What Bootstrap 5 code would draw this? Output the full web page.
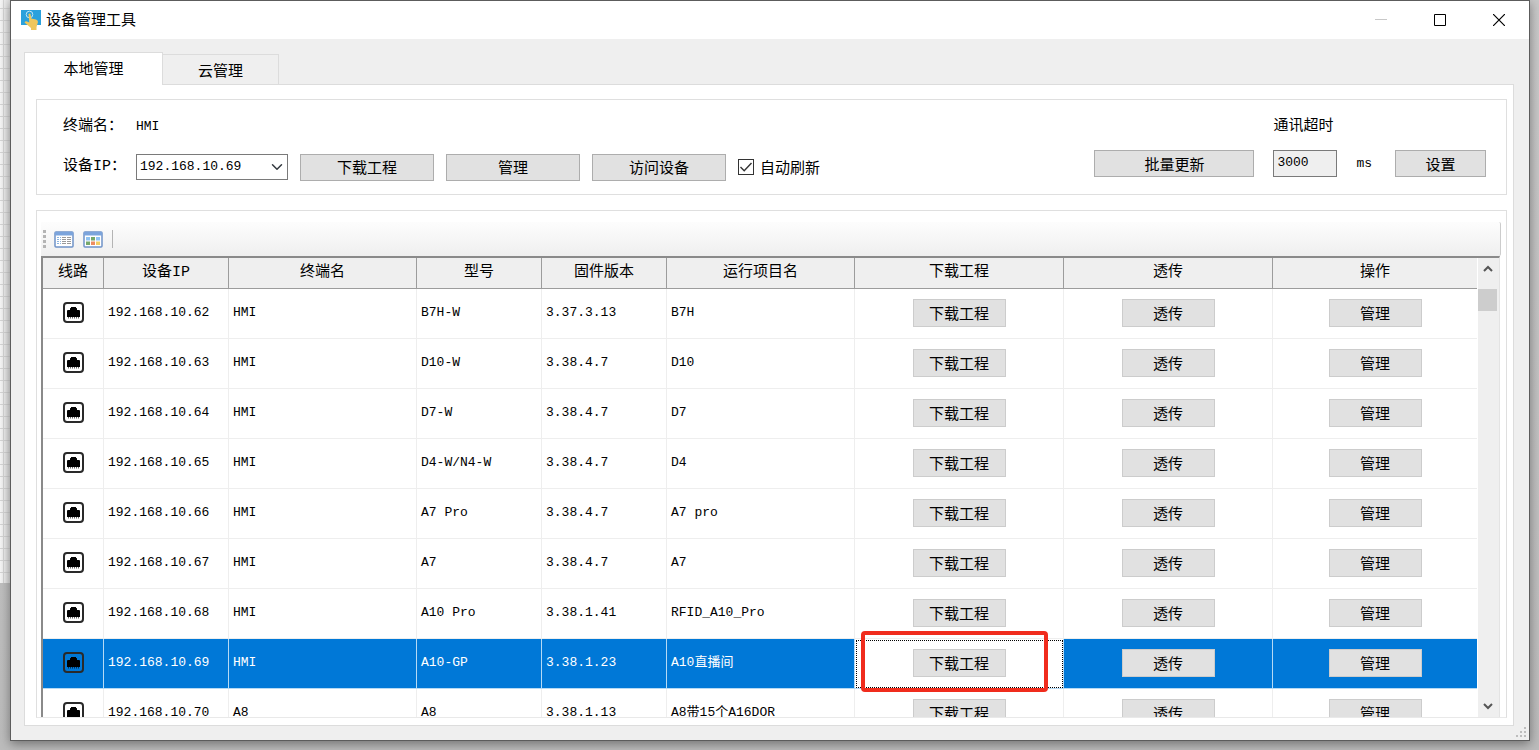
<!DOCTYPE html>
<html lang="zh-CN">
<head>
<meta charset="utf-8">
<meta name="viewport" content="width=device-width, initial-scale=1">
<title>设备管理工具</title>
<link href="https://cdn.jsdelivr.net/npm/bootstrap@5.3.0/dist/css/bootstrap.min.css" rel="stylesheet">
<style>
  :root { --ui: "Liberation Mono", "Noto Sans CJK SC", monospace; --cjk: "Noto Sans CJK SC", sans-serif; }
  body { font-family: var(--ui); font-size: 15px; line-height: 20px; color: #000; background: #c4c4c4; }

  /* desktop behind the window */
  .desk { height: 100vh; padding: 0 9px 9px 10px; position: relative; background: linear-gradient(#c9c9c9, #bcbcbc); }
  .canvas-strip { position: absolute; left: 0; top: 0; width: 10px; bottom: 167px;
    background: repeating-linear-gradient(#0000 0 8px, #d4d4d4 8px 9px, #0000 9px 12px), linear-gradient(90deg, #0000 0 3px, #d4d4d4 3px 4px, #0000 4px), linear-gradient(90deg, #f6f6f6, #dedede); }

  /* window frame */
  .win { background: #efefef; border: 1px solid #5c5c5c; box-shadow: 0 3px 10px #0006; position: relative; min-width: 0; }
  .title-bar { height: 38px; background: #fff; padding-left: 10px; font-family: var(--cjk); }
  .title-bar svg.logo { margin-right: 5px; }
  .title-bar .caption { padding-bottom: 2px; }
  .win-btn { border: 0; background: none; width: 59px; height: 38px; padding: 0 2px 0 0; display: flex; align-items: center; justify-content: center; }
  .page-area { padding: 13px 15px 14px 13px; min-height: 0; }
  .tab-btn { border: 1px solid #dcdcdc; background: #efefef; border-bottom: 0; color: #000; padding: 0; height: 30px; width: 116px; font-family: var(--cjk); line-height: 30px; }
  .tab-btn.active { background: #fff; width: 139px; height: 33px; padding-bottom: 2px; margin-bottom: -1px; position: relative; z-index: 1; }
  .tab-btn + .tab-btn { border-left: 0; }
  .sheet { background: #fff; border: 1px solid #dcdcdc; padding: 14px 6px 7px 11px; min-height: 0; }
  .group { border: 1px solid #dfdfdf; }

  /* settings */
  .settings { padding: 17px 20px 13px 26px; margin-bottom: 15px; }
  .settings-line { min-height: 28px; }
  .key { width: 73px; }
  .small-mono { font-size: 13px; }
  .flat { background: #e1e1e1; border: 1px solid #adadad; border-radius: 0; color: #000; padding: 0; height: 27px; font-size: 15px; line-height: 24px; font-family: var(--cjk); }
  .flat:hover { background: #e5f1fb; border-color: #0078d7; color: #000; }
  .w-act { width: 134px; }
  .w-batch { width: 160px; }
  .w-set { width: 91px; }
  .combo { width: 152px; height: 26px; border: 1px solid #7a7a7a; border-radius: 0; padding: 0 20px 1px 3px; color: #000; font-size: 13px; line-height: 20px;
    background-position: right 4px center; background-size: 12px 12px; }
  .num { width: 64px; height: 27px; border: 1px solid #7a7a7a; border-radius: 0; padding: 0 3px 3px; background: #efefef; color: #000; font-size: 13px; }
  .tick { appearance: none; width: 16px; height: 16px; border: 1px solid #333; margin: 0; background: #fff; }
  .tick:checked { background: #fff url("data:image/svg+xml,%3Csvg xmlns='http://www.w3.org/2000/svg' viewBox='0 0 14 14'%3E%3Cpath d='M1.5 7l3.7 3.7L12.5 3' fill='none' stroke='%23333' stroke-width='1.4'/%3E%3C/svg%3E"); }
  .tick-label { font-family: var(--cjk); }
  .gap-6 { gap: 6px; }
  .gap-12 { gap: 12px; }
  .gap-19 { gap: 19px; }

  /* device list */
  .list-box { padding: 11px 5px 0 4px; min-height: 0; border-bottom-color: #e9e9e9; }
  .tools { height: 34px; background: linear-gradient(#fdfdfd, #efefef); border-right: 1px solid #ccc; padding: 0 2px; border-radius: 0 2px 2px 0; }
  .tool { border: 0; background: none; padding: 0; width: 29px; height: 22px; display: flex; align-items: center; }
  .grip { width: 3px; height: 18px; margin-right: 8px; background: repeating-linear-gradient(#b4b4b4 0 3px, #0000 3px 5px); }
  .bar-end { width: 1px; height: 18px; background: #b4b4b4; }
  .grid-wrap { min-height: 0; border-top: 2px solid #8a8a8a; border-left: 2px solid #8a8a8a; margin-right: 1px; border-right: 1px solid #e3e3e3; }
  .devices { table-layout: fixed; width: 100%; border-collapse: separate; border-spacing: 0; font-size: 13px; }
  .devices th { height: 31px; background: #efefef; border-right: 1px solid #9c9c9c; border-bottom: 1px solid #9c9c9c; font-weight: 400; font-size: 15px; text-align: center; padding: 0; }
  .devices td { height: 50px; border-right: 1px solid #eee; border-bottom: 1px solid #eee; padding: 0 3px 2px 4px; white-space: nowrap; }
  .devices th:last-child, .devices td:last-child { border-right: 0; }
  .devices td.c { text-align: center; padding: 0 0 2px; }
  .devices td svg { display: block; margin: 0 auto; }
  .devices .flat { width: 93px; border-color: #ccc; height: 28px; }
  .c-line { width: 61px; } .c-mid { width: 125px; } .c-wide { width: 188px; } .c-act { width: 209px; }
  .devices .picked td { background: #0078d7; color: #fff; border-color: #b5daf5; }
  .devices .picked td.focus-cell { background: #fff; outline: 1px dotted #000; outline-offset: -2px; position: relative; }
  .marker { position: absolute; left: 6px; right: 15px; top: -8px; bottom: -4px; border: 4px solid #f02c1d; border-radius: 4px; pointer-events: none; z-index: 2; }
  .scroll { width: 22px; flex: none; background: #efefef; border-left: 1px solid #fff; }
  .scroll button { border: 0; background: none; padding: 0; height: 22px; width: 19px; display: flex; align-items: center; justify-content: center; }
  .thumb { width: 19px; height: 22px; margin-top: 9px; background: #cdcdcd; }
  .resize { position: absolute; right: 2px; bottom: 2px; }
</style>
</head>
<body>
<svg width="0" height="0" class="position-absolute" aria-hidden="true">
  <symbol id="port" viewBox="0 0 21 21">
    <rect x="1" y="1" width="19" height="19" rx="3" fill="none" stroke="#2a2a2a" stroke-width="2"/>
    <path d="M4 15V9q0-1 1-1h2V6.500q0-.5.5-.5H8V5h5v1h.500q.5 0 .5.500V8h2q1 0 1 1v6z"/>
    <path d="M5 15.500h11" stroke="#000" stroke-opacity=".6" stroke-width="2" stroke-dasharray="1 1"/>
  </symbol>
</svg>
<div class="desk d-flex">
  <div class="canvas-strip"></div>
  <main class="win flex-grow-1 d-flex flex-column">
    <header class="title-bar d-flex align-items-center">
      <svg width="20" height="20" viewBox="0 0 20 20" class="logo flex-shrink-0" aria-hidden="true">
        <path fill="#2ba1dc" d="M0 0h20v15H0z"/>
        <circle cx="8.500" cy="4.500" r="3.300" fill="none" stroke="#bfe4f5"/>
        <path fill="#efc65c" d="M7.500 4q1-1 2 0l.8 4.500L15 9.500q2 .5 2 2.500l-1.500 5V20H10v-2l-6.500-5.500Q4.500 10.800 6 11.500l2.300 1z"/>
      </svg>
      <span class="caption flex-grow-1">设备管理工具</span>
      <button class="win-btn" aria-label="最小化"><svg width="12" height="12"><path d="M0 5.500h12" stroke="#c8c8c8"/></svg></button>
      <button class="win-btn" aria-label="最大化"><svg width="12" height="12"><path d="M.5.5h11v11H.5z" fill="none" stroke="#000"/></svg></button>
      <button class="win-btn" aria-label="关闭"><svg width="12" height="12"><path d="M0 0l12 12M12 0L0 12" stroke="#000" stroke-width="1.200"/></svg></button>
    </header>
    <div class="page-area flex-grow-1 d-flex flex-column">
      <div class="d-flex align-items-end" role="tablist">
        <button class="tab-btn active" role="tab" aria-selected="true">本地管理</button>
        <button class="tab-btn" role="tab" aria-selected="false">云管理</button>
      </div>
      <section class="sheet flex-grow-1 d-flex flex-column">
        <div class="group settings d-flex justify-content-between">
          <div>
            <div class="d-flex align-items-center mb-3"><span class="key">终端名：</span><span class="small-mono">HMI</span></div>
            <div class="d-flex align-items-center settings-line gap-12">
              <div class="d-flex align-items-center">
                <label class="key" for="ip">设备IP：</label>
                <select id="ip" class="form-select combo"><option>192.168.10.69</option></select>
              </div>
              <button class="btn flat w-act">下载工程</button>
              <button class="btn flat w-act">管理</button>
              <button class="btn flat w-act">访问设备</button>
              <div class="d-flex align-items-center gap-6">
                <input type="checkbox" class="tick" id="auto" checked><label for="auto" class="tick-label">自动刷新</label>
              </div>
            </div>
          </div>
          <div class="d-flex align-items-end gap-19 pb-1">
            <button class="btn flat w-batch">批量更新</button>
            <div class="d-flex flex-column justify-content-between h-100">
              <label for="timeout">通讯超时</label>
              <div class="d-flex align-items-center gap-19">
                <input id="timeout" class="form-control num" value="3000">
                <span class="small-mono">ms</span>
              </div>
            </div>
            <button class="btn flat w-set ms-1">设置</button>
          </div>
        </div>

        <div class="group list-box flex-grow-1 d-flex flex-column">
          <div class="tools d-flex align-items-center flex-shrink-0">
            <span class="grip"></span>
            <button class="tool" aria-label="列表视图">
              <svg width="20" height="17" viewBox="0 0 20 17">
                <rect x="1" y="1" width="18" height="15" rx="1" fill="#fff" stroke="#6f93c8" stroke-width="1.500"/>
                <path fill="#7ba4dc" d="M1 1h18v3.500H1z"/>
                <path fill="none" stroke="#8ab4e0" stroke-dasharray="2 1" d="M3 6.500h4M3 8.500h4M3 10.500h4M3 12.500h4"/>
                <path fill="none" stroke="#9a9a9a" stroke-dasharray="4 1" d="M8 6.500h9M8 8.500h9M8 10.500h9M8 12.500h9"/>
              </svg>
            </button>
            <button class="tool" aria-label="图标视图">
              <svg width="20" height="17" viewBox="0 0 20 17">
                <rect x="1" y="1" width="18" height="15" rx="1" fill="#fff" stroke="#6f93c8" stroke-width="1.500"/>
                <path fill="#7ba4dc" d="M1 1h18v3.500H1z"/>
                <path fill="#8fc3f2" d="M3 6h4v3.500H3zM13 6h4v3.500h-4z"/><path fill="#76a86b" d="M8 6h4v3.500H8zM3 10.500h4V14H3z"/>
                <path fill="#ee8d60" d="M8 10.500h4V14H8z"/><path fill="#f3ce62" d="M13 10.500h4V14h-4z"/>
              </svg>
            </button>
            <span class="bar-end"></span>
          </div>
          <div class="grid-wrap d-flex flex-grow-1 overflow-hidden">
            <div class="flex-grow-1 overflow-hidden">
              <table class="devices">
                <colgroup><col class="c-line"><col class="c-mid"><col class="c-wide"><col class="c-mid"><col class="c-mid"><col class="c-wide"><col class="c-act"><col class="c-act"><col></colgroup>
                <thead>
                  <tr><th>线路</th><th>设备IP</th><th>终端名</th><th>型号</th><th>固件版本</th><th>运行项目名</th><th>下载工程</th><th>透传</th><th>操作</th></tr>
                </thead>
                <tbody id="rows"></tbody>
              </table>
            </div>
            <div class="scroll d-flex flex-column">
              <button aria-label="向上滚动"><svg width="10" height="8"><path d="M1 6l4-4 4 4" fill="none" stroke="#555" stroke-width="2"/></svg></button>
              <div class="thumb"></div>
              <button class="mt-auto" aria-label="向下滚动"><svg width="10" height="8"><path d="M1 2l4 4 4-4" fill="none" stroke="#555" stroke-width="2"/></svg></button>
            </div>
          </div>
        </div>
      </section>
    </div>
    <svg class="resize" width="11" height="11" fill="#bdbdbd" aria-hidden="true"><path d="M8 0h2v2H8zM4 4h2v2H4zM8 4h2v2H8zM0 8h2v2H0zM4 8h2v2H4zM8 8h2v2H8z"/></svg>
  </main>
</div>
<script>
  const devices = [
    ["192.168.10.62", "HMI", "B7H-W", "3.37.3.13", "B7H"],
    ["192.168.10.63", "HMI", "D10-W", "3.38.4.7", "D10"],
    ["192.168.10.64", "HMI", "D7-W", "3.38.4.7", "D7"],
    ["192.168.10.65", "HMI", "D4-W/N4-W", "3.38.4.7", "D4"],
    ["192.168.10.66", "HMI", "A7 Pro", "3.38.4.7", "A7 pro"],
    ["192.168.10.67", "HMI", "A7", "3.38.4.7", "A7"],
    ["192.168.10.68", "HMI", "A10 Pro", "3.38.1.41", "RFID_A10_Pro"],
    ["192.168.10.69", "HMI", "A10-GP", "3.38.1.23", "A10直播间"],
    ["192.168.10.70", "A8", "A8", "3.38.1.13", "A8带15个A16DOR"]
  ];
  const selected = "192.168.10.69";
  document.getElementById("rows").innerHTML = devices.map(d => {
    const on = d[0] === selected;
    return `<tr${on ? ' class="picked"' : ''}>
      <td class="c"><svg width="21" height="21"><use href="#port"/></svg></td>
      ${d.map(t => `<td>${t}</td>`).join("")}
      <td class="c${on ? ' focus-cell' : ''}"><button class="btn flat">下载工程</button>${on ? '<span class="marker"></span>' : ''}</td>
      <td class="c"><button class="btn flat">透传</button></td>
      <td class="c"><button class="btn flat">管理</button></td></tr>`;
  }).join("");
</script>
<script src="https://cdn.jsdelivr.net/npm/bootstrap@5.3.0/dist/js/bootstrap.bundle.min.js"></script>
</body>
</html>
